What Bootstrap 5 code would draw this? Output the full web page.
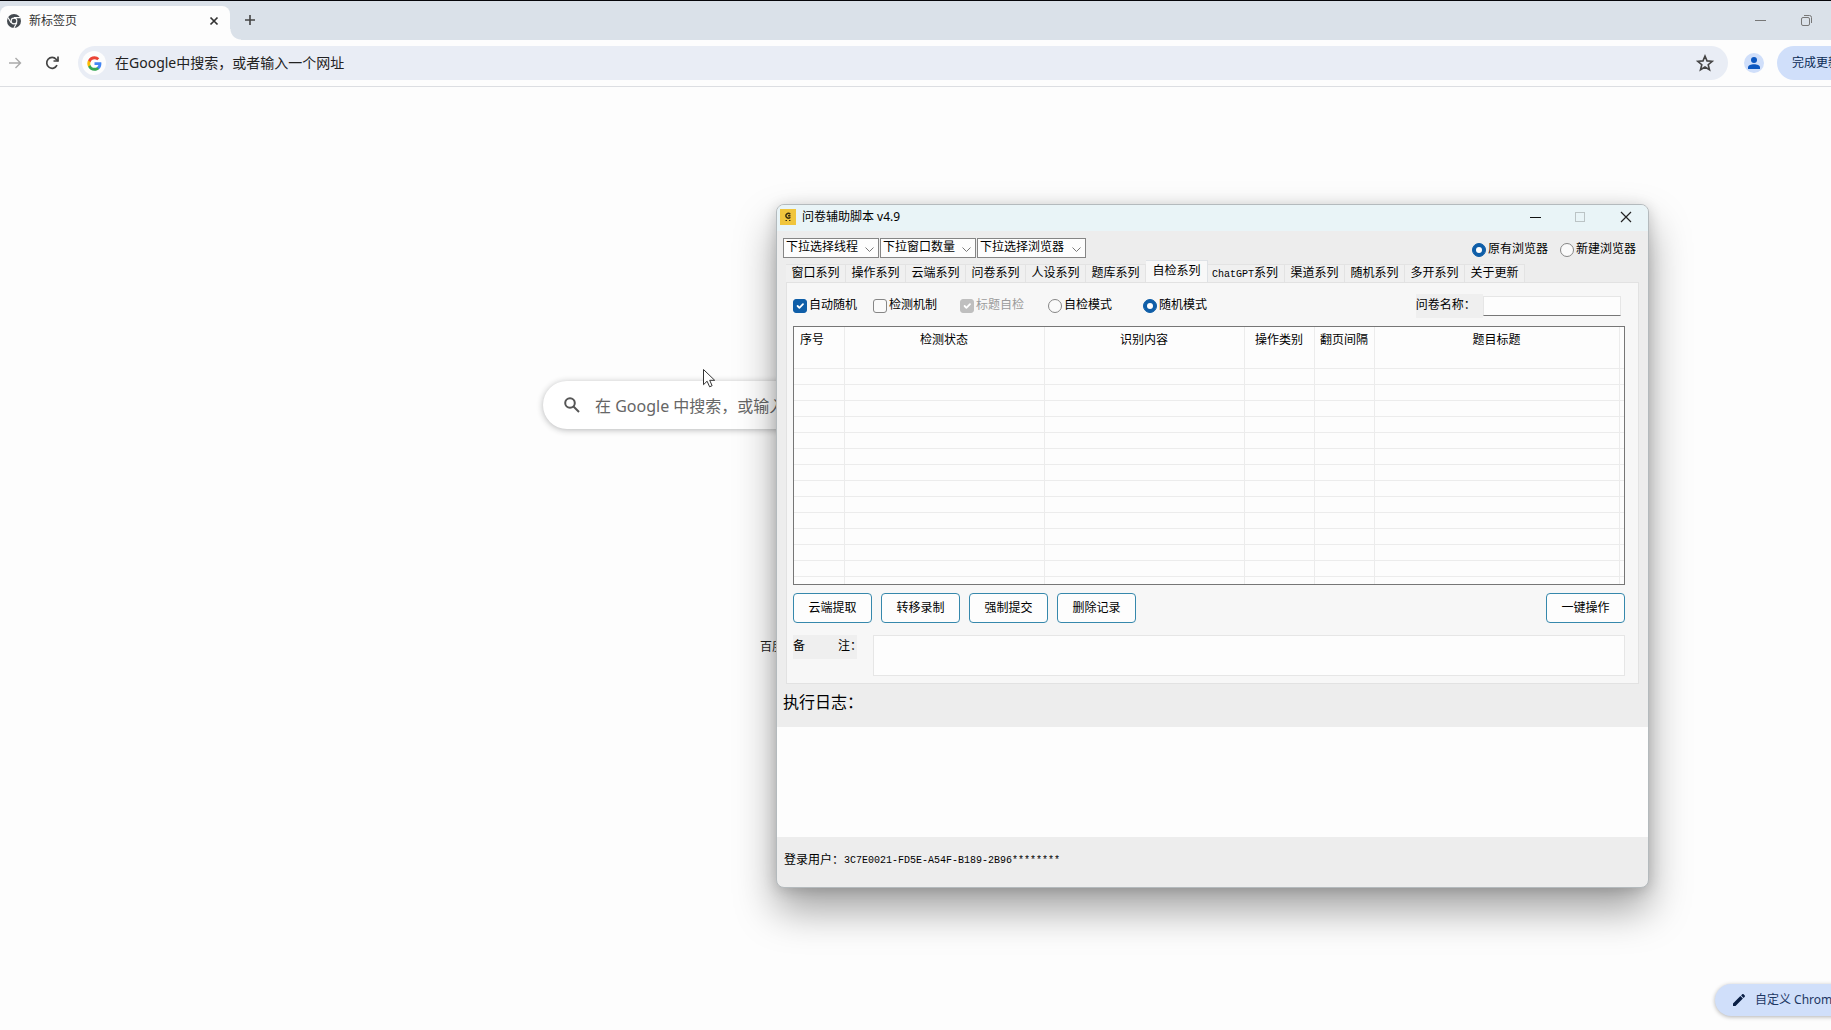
<!DOCTYPE html>
<html lang="zh-CN">
<head>
<meta charset="utf-8">
<meta name="viewport" content="width=device-width, initial-scale=1">
<title>新标签页</title>
<link rel="stylesheet" href="https://cdn.jsdelivr.net/npm/bootstrap@5.3.0/dist/css/bootstrap.min.css">
<script src="https://cdn.jsdelivr.net/npm/bootstrap@5.3.0/dist/js/bootstrap.bundle.min.js"></script>
<style>
  body { font-family: "Noto Sans", "Noto Sans CJK SC", sans-serif; font-size: 12px; line-height: 16px; color: #1f1f1f; background: #fdfdfd; }
  button, input, select, textarea { font-family: inherit; }
  .icon-btn { border: 0; background: none; padding: 0; display: flex; align-items: center; justify-content: center; flex: none; }

  /* browser frame */
  .tab-strip { height: 40px; border-top: 1px solid #05050a; background: #dae1e9; padding-top: 5px; }
  .page-tab { width: 230px; height: 34px; background: #fdfdfd; border-radius: 8px 8px 0 0; padding: 0 11px 5px 7px; gap: 8px; color: #333; }
  .tab-flare { width: 11px; height: 11px; background: radial-gradient(circle at 100% 0, transparent 10px, #fdfdfd 11px); }
  .strip-btn { height: 28px; width: 18px; }
  .caption-group { padding-right: 2px; }
  .caption-btn { height: 28px; width: 46px; }
  .address-row { height: 47px; padding: 6px 0; border-bottom: 1px solid #dcdee2; }
  .fwd-btn { margin: 0 22px 0 8px; }
  .reload-btn { margin-right: 18px; }
  .omnibox { height: 34px; border-radius: 17px; background: #e9edf5; padding: 0 13px 0 4px; }
  .g-disc { width: 24px; height: 24px; border-radius: 50%; background: #fdfdfd; }
  .omni-input { border: 0; background: none; font-size: 14px; line-height: 20px; padding: 0 0 0 9px; color: #222; outline: 0; }
  .omni-input::placeholder, .find-input::placeholder { opacity: 1; color: inherit; }
  .update-slot { width: 54px; }
  .update-btn { height: 34px; border-radius: 17px; background: #d0dffa; border: 0; padding: 0 15px; color: #0a2a55; white-space: nowrap; }
  .avatar { width: 20px; height: 20px; border-radius: 50%; background: #d0dffa; margin: 0 13px 0 16px; }

  .find-box { position: absolute; left: 543px; top: 381px; width: 561px; height: 48px; border-radius: 24px; background: #fff; box-shadow: 0 1px 6px rgba(32,33,36,.32); padding: 0 20px; gap: 14px; }
  .find-input { border: 0; font-size: 16px; line-height: 24px; color: #666; background: none; outline: 0; padding: 2px 0 0; }
  .shortcut { position: absolute; left: 760px; top: 639px; color: #1f1f1f; text-decoration: none; }
  .pointer { position: absolute; left: 702px; top: 368px; }
  .customize { position: absolute; left: 1715px; top: 984px; height: 32px; border-radius: 16px; border: 0; background: #d0dffa; color: #1d3763; padding: 0 18px; gap: 10px; white-space: nowrap; box-shadow: 0 1px 4px rgba(0,0,0,.3); }

  /* script helper window */
  .app-win { position: absolute; left: 776px; top: 204px; width: 873px; border: 1px solid #b4babd; border-radius: 8px; background: #ededed; color: #000; font-family: "Liberation Mono", "Noto Sans CJK SC", monospace; box-shadow: 0 22px 40px rgba(0,0,0,.36), 0 2px 14px rgba(0,0,0,.16); overflow: hidden; }
  .app-win .latin { font-size: 10px; }
  .title-row { height: 26px; background: #e9f4f7; padding: 0 0 2px 3px; font-family: "Noto Sans", "Noto Sans CJK SC", sans-serif; }
  .logo-tile { width: 16px; height: 16px; background: #f0c53c; margin-right: 6px; }
  .title-btn { width: 45px; height: 24px; }
  .pick-row { padding: 7px 12px 0 6px; height: 30px; }
  .combo { height: 20px; min-height: 0; width: 96px; border: 1px solid #858585; border-radius: 0; padding: 0 18px 0 2px; font-size: 12px; line-height: 18px; color: #000; background-color: #fdfdfd; background-position: right 4px top 6px; background-size: 9px 9px; background-image: url("data:image/svg+xml,%3Csvg xmlns='http://www.w3.org/2000/svg' viewBox='0 0 9 9'%3E%3Cpath fill='none' stroke='%23777' d='m.5 2.500 4 4 4-4'/%3E%3C/svg%3E"); }
  .combo + .combo { margin-left: 1px; }
  .combo-wide { width: 109px; }
  .opt { display: flex; align-items: center; gap: 2px; white-space: nowrap; }
  .opt .form-check-input { width: 14px; height: 14px; margin: 0; border-color: #868686; flex: none; background-color: #fafafa; }
  .opt .form-check-input:checked { background-color: #0f5ea8; border-color: #0f5ea8; }
  .opt .form-check-input:disabled { background-color: #bfbfbf; border-color: #bfbfbf; opacity: 1; }
  .opt .form-check-input[type=checkbox] { border-radius: 3px; }
  .opt-off { color: #9b9b9b; }
  .tabs-bar { padding-left: 9px; height: 21px; border: 0; flex-wrap: nowrap; }
  .tabs-bar .nav-link { height: 18px; padding: 0 5px; margin: 0; border: 1px solid #e3e3e3; border-width: 1px 1px 0 0; border-radius: 0; color: #000; background: #f0f0f0; font-size: 12px; line-height: 18px; white-space: nowrap; width: 60px; text-align: center; }
  .tabs-bar .nav-link.active { height: 22px; background: #f8f8f8; line-height: 22px; width: 62px; margin-right: -2px; position: relative; }
  .tabs-bar .link-wide { width: 79px; }
  .tab-sheet { margin: 0 9px; border: 1px solid #e2e2e2; background: #f7f7f7; padding: 11px 13px 7px 6px; }
  .check-row { height: 24px; }
  .opt-mech { margin-right: 23px; }
  .opt-title { margin-right: 24px; }
  .opt-random { margin-left: 31px; }
  .tag-label { background: #efefef; height: 24px; line-height: 24px; white-space: pre; }
  .name-input { width: 138px; height: 20px; border: 1px solid #e6e6e6; border-bottom-color: #777; background: #fdfdfd; font-size: 12px; padding: 0 3px; border-radius: 0; }
  .grid-frame { border: 1px solid #767676; background: #fdfdfd; margin: 8px 0; }
  .grid-table { table-layout: fixed; margin: 0; font-size: 12px; line-height: 16px; width: 100%; }
  .grid-table th, .grid-table td { padding: 0; border: solid #ececec; border-width: 0 1px 0 0; background: none; color: #000; font-weight: 400; text-align: center; }
  .grid-table th { height: 25px; padding-top: 2px; }
  .grid-table th:first-child { text-align: left; padding-left: 6px; }
  .grid-table th:last-child, .grid-table td:last-child { border-right: 0; }
  .grid-table td { height: 16px; border-bottom-width: 1px; }
  .grid-table tr:last-child td { height: 8px; border-bottom: 0; }
  .act-row { gap: 9px; }
  .act-btn { width: 79px; height: 30px; border: 1px solid #3688ac; border-radius: 4px; background: #fdfdfd; font-size: 12px; line-height: 16px; color: #000; padding: 2px 0 0; }
  .note-label { width: 69px; background: linear-gradient(90deg, #efefef 64px, transparent 64px); }
  .note-line { gap: 11px; }
  .note-input { height: 41px; border: 1px solid #e6e6e6; border-radius: 0; background: #fdfdfd; resize: none; font-size: 12px; padding: 4px; }
  .log-title { font-size: 16px; line-height: 24px; padding: 8px 0 11px 6px; display: block; }
  .log-area { height: 110px; border: 0; border-radius: 0; background: #fdfdfd; resize: none; display: block; width: 100%; }
  .user-row { height: 50px; padding-left: 7px; padding-bottom: 2px; }
</style>
</head>
<body class="vh-100 overflow-hidden position-relative">
<header>
  <div class="tab-strip d-flex">
    <div class="page-tab d-flex align-items-center">
      <svg width="14" height="14" viewBox="0 0 14 14"><circle cx="7" cy="7" r="7" fill="#444a50"/><circle cx="7" cy="7" r="3.4" fill="#fdfdfd"/><circle cx="7" cy="7" r="2.3" fill="#444a50"/><path d="M7 3.6h6.2M4 8.7 1 3.5M9.900 8.800 6.900 14" stroke="#fdfdfd" stroke-width="1.1"/></svg>
      <span class="flex-grow-1">新标签页</span>
      <button class="icon-btn" aria-label="关闭标签页"><svg width="10" height="10" viewBox="0 0 10 10"><path d="m1.500 1.500 7 7m0-7-7 7" stroke="#333" stroke-width="1.7"/></svg></button>
    </div>
    <div class="tab-flare align-self-end"></div>
    <button class="icon-btn strip-btn" aria-label="新建标签页"><svg width="12" height="12" viewBox="0 0 12 12"><path d="M6 1v10M1 6h10" stroke="#444" stroke-width="1.6"/></svg></button>
    <div class="caption-group d-flex ms-auto">
      <button class="icon-btn caption-btn" aria-label="最小化"><svg width="11" height="11"><path d="M0 5.500h11" stroke="#777"/></svg></button>
      <button class="icon-btn caption-btn" aria-label="还原"><svg width="11" height="11" viewBox="0 0 11 11" fill="none" stroke="#777"><rect x=".5" y="2.500" width="8" height="8" rx="1.500"/><path d="M3 .5h5.500a2 2 0 0 1 2 2V8"/></svg></button>
    </div>
  </div>
  <div class="address-row d-flex align-items-center">
    <button class="icon-btn fwd-btn" aria-label="前进"><svg width="14" height="14" viewBox="0 0 14 14" fill="none" stroke="#aaa" stroke-width="1.400"><path d="M1 7h11.500M7.500 2l5 5-5 5"/></svg></button>
    <button class="icon-btn reload-btn" aria-label="刷新"><svg width="16" height="16" viewBox="0 0 16 16" fill="none" stroke="#444" stroke-width="1.700"><path d="M13 10.200A5.400 5.400 0 1 1 12.200 4.300L14 6"/><path d="M14 1.500V6H9.500"/></svg></button>
    <div class="omnibox d-flex align-items-center flex-grow-1">
      <span class="g-disc d-flex align-items-center justify-content-center">
        <svg width="15" height="15" viewBox="0 0 48 48"><path fill="#4285f4" d="M46 24.500c0-1.600-.1-3.100-.4-4.500H24v8.500h12.400a10.600 10.600 0 0 1-4.600 7v5.700h7.400C43.500 37.200 46 31.400 46 24.500z"/><path fill="#34a853" d="M24 47c6.200 0 11.400-2 15.200-5.600l-7.400-5.700c-2 1.400-4.700 2.200-7.800 2.200-6 0-11-4-12.900-9.500H3.500v5.900A23 23 0 0 0 24 47z"/><path fill="#fbbc05" d="M11.100 28.400a13.800 13.800 0 0 1 0-8.800v-5.900H3.500a23 23 0 0 0 0 20.600z"/><path fill="#ea4335" d="M24 10.100c3.400 0 6.400 1.200 8.800 3.400l6.500-6.500A22 22 0 0 0 24 1 23 23 0 0 0 3.500 13.700l7.600 5.900C13 14.200 18 10.100 24 10.100z"/></svg>
      </span>
      <input class="omni-input flex-grow-1" type="text" aria-label="地址栏" placeholder="在Google中搜索，或者输入一个网址">
      <button class="icon-btn" aria-label="收藏"><svg width="20" height="20" viewBox="0 0 20 20" fill="none" stroke="#444" stroke-width="1.600"><path d="m10 3 2 4.900 5.200.4-4 3.400 1.300 5.100L10 14l-4.500 2.800 1.300-5.100-4-3.400 5.200-.4z"/></svg></button>
    </div>
    <button class="icon-btn avatar" aria-label="个人资料"><svg width="14" height="14" viewBox="0 0 14 14" fill="#0b57c0"><circle cx="7" cy="4" r="3"/><path d="M1 13v-1.500C1 9.200 4 8.200 7 8.200s6 1 6 3.300V13z"/></svg></button>
    <div class="update-slot flex-shrink-0"><button class="update-btn">完成更新</button></div>
  </div>
</header>

<main>
  <div class="find-box d-flex align-items-center">
    <svg class="flex-shrink-0" width="18" height="18" viewBox="0 0 18 18" fill="none" stroke="#555" stroke-width="2"><circle cx="7" cy="7" r="4.800"/><path d="m10.500 10.500 5.500 5.500"/></svg>
    <input class="find-input flex-grow-1" type="text" aria-label="搜索" placeholder="在 Google 中搜索，或输入网址">
  </div>
  <a class="shortcut" href="#">百度</a>
  <button class="customize d-flex align-items-center">
    <svg width="12" height="12" viewBox="0 0 12 12" fill="#0a1f45"><path d="M0 12V9.500L7.400 2.100l2.500 2.500L2.500 12zM8.100 1.400 9.200.3a1 1 0 0 1 1.400 0l1.100 1.100a1 1 0 0 1 0 1.400l-1.100 1.100z"/></svg>自定义 Chrome
  </button>
  <svg class="pointer" width="16" height="21" viewBox="0 0 16 21"><path d="M1.500 1.500v15.200l3.600-3.500 2.500 5.600 2.500-1.100-2.400-5.400h5z" fill="#fff" stroke="#333"/></svg>

  <section class="app-win">
    <div class="title-row d-flex align-items-center">
      <span class="logo-tile d-flex"><svg class="m-auto" width="10" height="12" viewBox="0 0 10 12"><path d="M7.300 3.300A2.500 2.300 0 1 0 7.300 6.200M5 4.800h2.500" fill="none" stroke="#3c3110" stroke-width="1.500"/><path d="M2.500 9.500H4M6 9.500h1.500" stroke="#3c3110" stroke-width="1.200"/></svg></span>
      <span class="flex-grow-1">问卷辅助脚本 v4.9</span>
      <button class="icon-btn title-btn" aria-label="最小化"><svg width="11" height="11"><path d="M0 5.500h11" stroke="#111"/></svg></button>
      <button class="icon-btn title-btn" aria-label="最大化" disabled><svg width="11" height="11"><rect x=".5" y=".5" width="9" height="9" fill="none" stroke="#bbc3c5"/></svg></button>
      <button class="icon-btn title-btn" aria-label="关闭"><svg width="12" height="12"><path d="m1 1 10 10M11 1 1 11" stroke="#222" stroke-width="1.200"/></svg></button>
    </div>

    <div class="pick-row d-flex align-items-start">
      <select class="form-select combo" aria-label="线程"><option>下拉选择线程</option></select>
      <select class="form-select combo" aria-label="窗口数量"><option>下拉窗口数量</option></select>
      <select class="form-select combo combo-wide" aria-label="浏览器"><option>下拉选择浏览器</option></select>
      <div class="d-flex ms-auto gap-2 pt-1">
        <label class="opt me-1"><input class="form-check-input" type="radio" name="browser" checked>原有浏览器</label>
        <label class="opt"><input class="form-check-input" type="radio" name="browser">新建浏览器</label>
      </div>
    </div>

    <nav class="nav nav-tabs tabs-bar align-items-end">
      <a class="nav-link" href="#">窗口系列</a>
      <a class="nav-link" href="#">操作系列</a>
      <a class="nav-link" href="#">云端系列</a>
      <a class="nav-link" href="#">问卷系列</a>
      <a class="nav-link" href="#">人设系列</a>
      <a class="nav-link" href="#">题库系列</a>
      <a class="nav-link active" href="#">自检系列</a>
      <a class="nav-link link-wide" href="#"><span class="latin">ChatGPT</span>系列</a>
      <a class="nav-link" href="#">渠道系列</a>
      <a class="nav-link" href="#">随机系列</a>
      <a class="nav-link" href="#">多开系列</a>
      <a class="nav-link" href="#">关于更新</a>
    </nav>

    <div class="tab-sheet">
      <div class="check-row d-flex align-items-center">
        <label class="opt me-3"><input class="form-check-input" type="checkbox" checked>自动随机</label>
        <label class="opt opt-mech"><input class="form-check-input" type="checkbox">检测机制</label>
        <label class="opt opt-off opt-title"><input class="form-check-input" type="checkbox" checked disabled>标题自检</label>
        <label class="opt"><input class="form-check-input" type="radio" name="mode">自检模式</label>
        <label class="opt opt-random"><input class="form-check-input" type="radio" name="mode" checked>随机模式</label>
        <label class="tag-label ms-auto" for="quiz-name">问卷名称： </label>
        <input class="name-input me-1" id="quiz-name" type="text">
      </div>

      <div class="grid-frame">
        <table class="grid-table">
          <colgroup><col style="width:50px"><col style="width:200px"><col style="width:200px"><col style="width:70px"><col style="width:60px"><col><col style="width:5px"></colgroup>
          <thead><tr><th>序号</th><th>检测状态</th><th>识别内容</th><th>操作类别</th><th>翻页间隔</th><th>题目标题</th><th></th></tr></thead>
          <tbody>
            <tr><td></td><td></td><td></td><td></td><td></td><td></td><td></td></tr>
            <tr><td></td><td></td><td></td><td></td><td></td><td></td><td></td></tr>
            <tr><td></td><td></td><td></td><td></td><td></td><td></td><td></td></tr>
            <tr><td></td><td></td><td></td><td></td><td></td><td></td><td></td></tr>
            <tr><td></td><td></td><td></td><td></td><td></td><td></td><td></td></tr>
            <tr><td></td><td></td><td></td><td></td><td></td><td></td><td></td></tr>
            <tr><td></td><td></td><td></td><td></td><td></td><td></td><td></td></tr>
            <tr><td></td><td></td><td></td><td></td><td></td><td></td><td></td></tr>
            <tr><td></td><td></td><td></td><td></td><td></td><td></td><td></td></tr>
            <tr><td></td><td></td><td></td><td></td><td></td><td></td><td></td></tr>
            <tr><td></td><td></td><td></td><td></td><td></td><td></td><td></td></tr>
            <tr><td></td><td></td><td></td><td></td><td></td><td></td><td></td></tr>
            <tr><td></td><td></td><td></td><td></td><td></td><td></td><td></td></tr>
            <tr><td></td><td></td><td></td><td></td><td></td><td></td><td></td></tr>
            <tr><td></td><td></td><td></td><td></td><td></td><td></td><td></td></tr>
          </tbody>
        </table>
      </div>

      <div class="act-row d-flex">
        <button class="btn act-btn">云端提取</button>
        <button class="btn act-btn">转移录制</button>
        <button class="btn act-btn">强制提交</button>
        <button class="btn act-btn">删除记录</button>
        <button class="btn act-btn ms-auto">一键操作</button>
      </div>

      <div class="note-line d-flex align-items-start mt-2 pt-1">
        <label class="tag-label note-label d-flex justify-content-between" for="note"><span>备</span><span>注：</span></label>
        <textarea class="note-input flex-grow-1" id="note"></textarea>
      </div>
    </div>

    <label class="log-title" for="log">执行日志：</label>
    <textarea class="log-area" id="log" readonly></textarea>
    <div class="user-row d-flex align-items-center">登录用户：<span class="latin">3C7E0021-FD5E-A54F-B189-2B96********</span></div>
  </section>
</main>
</body>
</html>
